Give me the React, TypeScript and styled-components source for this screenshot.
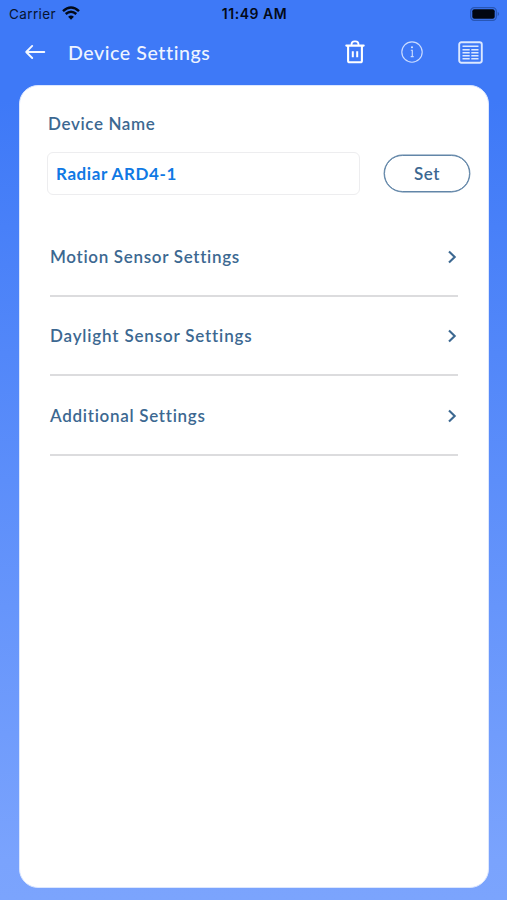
import React from "react";
import styled, { createGlobalStyle } from "styled-components";

const GlobalStyle = createGlobalStyle`
  * { box-sizing: border-box; }
  body { margin: 0; }
`;

const Screen = styled.div`
  width: 507px;
  height: 900px;
  display: flex;
  flex-direction: column;
  overflow: hidden;
  background: linear-gradient(180deg, #3e79f7 0, #3e79f7 100px, #7aa3fd 860px, #7ba4fd 100%);
  font-family: Lato, "Open Sans", sans-serif;
`;

const StatusBar = styled.div`
  height: 27px;
  display: grid;
  grid-template-columns: 1fr auto 1fr;
  align-items: center;
  padding: 0 7px 0 9px;
  font-family: Inter, "Liberation Sans", sans-serif;
  font-size: 13.5px;
  line-height: 16px;
  color: #07142f;
`;

const Carrier = styled.div`
  display: flex;
  align-items: center;
  gap: 6px;
  letter-spacing: 0.38px;
  svg { margin-top: -2px; }
`;

const Clock = styled.div`
  font-size: 14px;
  font-weight: 600;
  letter-spacing: 0.55px;
  color: #030a18;
`;

const Battery = styled.div`
  display: flex;
  justify-content: flex-end;
`;

const Header = styled.header`
  height: 58px;
  display: flex;
  align-items: flex-start;
  padding: 11px 24px 0 24px;
  color: #fff;
`;

const IconButton = styled.button<{ $gap?: number }>`
  height: 28px;
  display: flex;
  align-items: center;
  margin: 0 0 0 ${(p) => p.$gap ?? 0}px;
  padding: 0;
  border: 0;
  background: none;
  color: inherit;
`;

const Title = styled.h1<{ $spacing: number }>`
  flex: 1;
  margin: 1px 0 0 21px;
  font-size: 19.6px;
  font-weight: 500;
  line-height: 28px;
  letter-spacing: ${(p) => p.$spacing}px;
  color: #eef4ff;
`;

const Card = styled.main`
  width: 470px;
  height: 803px;
  margin-left: 19px;
  padding: 27px 18px 0 28px;
  border: 1px solid #dce7ff;
  border-radius: 19px;
  background: #fff;
`;

const Label = styled.span<{ $spacing: number }>`
  display: block;
  font-size: 17px;
  font-weight: 600;
  line-height: 22px;
  letter-spacing: ${(p) => p.$spacing}px;
  white-space: nowrap;
  color: #3c6891;
`;

const NameRow = styled.div`
  display: flex;
  align-items: center;
  gap: 24px;
  margin: 17px 0 0 -1px;
`;

const NameField = styled.div`
  width: 313px;
  height: 43px;
  display: flex;
  align-items: center;
  padding: 1px 8px 0;
  border: 1px solid #ededef;
  border-radius: 6px;
`;

const NameValue = styled(Label)`
  color: #1079e4;
  font-weight: 700;
`;

const SetButton = styled.button`
  width: 86px;
  height: 37px;
  display: flex;
  align-items: center;
  justify-content: center;
  padding: 1px 0 0;
  border: 1.5px solid #6286a8;
  border-radius: 19px;
  background: #fff;
  box-shadow: 0 0 0 0.4px #6286a8;
  font-family: inherit;
`;

const SettingsList = styled.nav`
  width: 408px;
  margin: 22px 0 0 2px;
`;

const SettingRow = styled.div`
  height: 79.5px;
  display: flex;
  align-items: center;
  justify-content: space-between;
  padding: 2px 0 0;
  border-bottom: 2px solid #dcdcde;
`;

const WifiIcon = () => (
  <svg width="18" height="14" viewBox="0 0 18 14" fill="none" stroke="#030a18">
    <path d="M1 5.1Q9-2 17 5.1" strokeWidth="2.5" />
    <path d="M3.7 8Q9 3.3 14.3 8" strokeWidth="2.4" />
    <path d="M9 13.8 6.1 10.8Q9 8.2 11.9 10.8Z" fill="#030a18" stroke="none" />
  </svg>
);

const BatteryIcon = () => (
  <svg width="30" height="14" viewBox="0 0 30 14">
    <rect x=".7" y=".7" width="25.6" height="12.6" rx="3.6" fill="none" stroke="#2856b5" strokeWidth="1.2" />
    <rect x="2.3" y="2.3" width="22.4" height="9.4" rx="2" fill="#020711" />
    <path d="M27.7 4.8q2.8 2.2 0 4.4Z" fill="#2856b5" />
  </svg>
);

const BackIcon = () => (
  <svg width="23" height="20" viewBox="0 0 23 20" fill="none" stroke="#f4f8ff" strokeWidth="1.9" strokeLinecap="round" strokeLinejoin="round">
    <path d="M20.3 10H2.2M8.2 3.9 2.2 10l6 6" />
  </svg>
);

const TrashIcon = () => (
  <svg width="20" height="24" viewBox="0 0 20 24" fill="none" stroke="#fff" strokeLinecap="round" strokeLinejoin="round">
    <path d="M1.3 5.6h17.4M3.1 6v14.7q0 1.6 1.6 1.6h10.6q1.6 0 1.6-1.6V6" strokeWidth="2.1" />
    <path d="M6.5 5V4.4q0-3 3-3h1q3 0 3 3V5" strokeWidth="1.8" />
    <path d="M7.8 11.2v6M12.2 11.2v6" strokeWidth="2" strokeLinecap="butt" />
  </svg>
);

const InfoIcon = () => (
  <svg width="22" height="22" viewBox="0 0 22 22" fill="none" stroke="#cbdcff" strokeWidth="1.15">
    <circle cx="11" cy="11" r="10.2" />
    <circle cx="11" cy="6.2" r="1.05" fill="#dce8ff" stroke="none" />
    <path d="M9.8 9.2h1.5v6.3M9.7 15.6h3" />
  </svg>
);

const NewsIcon = () => (
  <svg width="25" height="23" viewBox="0 0 25 23" fill="none" stroke="#dce8ff">
    <rect x="1.2" y="1.2" width="22.6" height="20.6" rx="2.2" strokeWidth="1.9" />
    <path d="M4.5 5.2h16M4.5 8.8h7.2M13.3 8.8h7.2M4.5 11.8h7.2M13.3 11.8h7.2M4.5 14.8h7.2M13.3 14.8h7.2M4.5 17.8h7.2M13.3 17.8h7.2" strokeWidth="1.6" />
  </svg>
);

const ChevronIcon = () => (
  <svg width="12" height="14" viewBox="0 0 12 14" fill="none" stroke="#3c6891" strokeWidth="2.1">
    <path d="M3 1.5 8.7 7 3 12.5" />
  </svg>
);

const settings = [
  { name: "Motion Sensor Settings", spacing: 0.68 },
  { name: "Daylight Sensor Settings", spacing: 0.82 },
  { name: "Additional Settings", spacing: 0.71 },
];

export default function App() {
  return (
    <Screen>
      <GlobalStyle />
      <StatusBar>
        <Carrier>Carrier <WifiIcon /></Carrier>
        <Clock>11:49 AM</Clock>
        <Battery><BatteryIcon /></Battery>
      </StatusBar>
      <Header>
        <IconButton aria-label="Back"><BackIcon /></IconButton>
        <Title $spacing={0.56}>Device Settings</Title>
        <IconButton aria-label="Delete"><TrashIcon /></IconButton>
        <IconButton aria-label="Information" $gap={36}><InfoIcon /></IconButton>
        <IconButton aria-label="Details" $gap={35}><NewsIcon /></IconButton>
      </Header>
      <Card>
        <Label $spacing={0.63}>Device Name</Label>
        <NameRow>
          <NameField><NameValue $spacing={0.58}>Radiar ARD4-1</NameValue></NameField>
          <SetButton><Label $spacing={0.6}>Set</Label></SetButton>
        </NameRow>
        <SettingsList>
          {settings.map((s) => (
            <SettingRow key={s.name}>
              <Label $spacing={s.spacing}>{s.name}</Label>
              <ChevronIcon />
            </SettingRow>
          ))}
        </SettingsList>
      </Card>
    </Screen>
  );
}
